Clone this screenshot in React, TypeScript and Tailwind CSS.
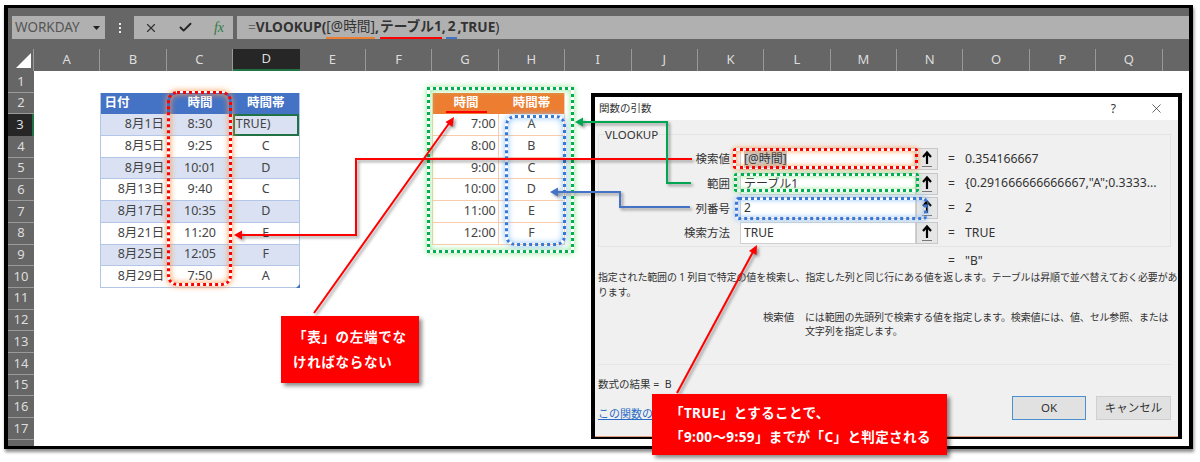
import { Check, X } from 'lucide-react';

const COLUMNS = ['A', 'B', 'C', 'D', 'E', 'F', 'G', 'H', 'I', 'J', 'K', 'L', 'M', 'N', 'O', 'P', 'Q'];
const ROWS = Array.from({ length: 17 }, (_, i) => i + 1);

const SCHEDULE = [
  { date: '8月1日', time: '8:30', band: 'TRUE)' },
  { date: '8月5日', time: '9:25', band: 'C' },
  { date: '8月9日', time: '10:01', band: 'D' },
  { date: '8月13日', time: '9:40', band: 'C' },
  { date: '8月17日', time: '10:35', band: 'D' },
  { date: '8月21日', time: '11:20', band: 'E' },
  { date: '8月25日', time: '12:05', band: 'F' },
  { date: '8月29日', time: '7:50', band: 'A' },
];

const LOOKUP = [
  { time: '7:00', band: 'A' },
  { time: '8:00', band: 'B' },
  { time: '9:00', band: 'C' },
  { time: '10:00', band: 'D' },
  { time: '11:00', band: 'E' },
  { time: '12:00', band: 'F' },
];

const ARGS = [
  { label: '検索値', value: '[@時間]', result: '0.354166667', selected: true },
  { label: '範囲', value: 'テーブル1', result: '{0.291666666666667,"A";0.3333...' },
  { label: '列番号', value: '2', result: '2' },
  { label: '検索方法', value: 'TRUE', result: 'TRUE' },
];

function RefButton() {
  return (
    <div className="flex h-[22px] w-[22px] items-center justify-center border border-[#c8c8c8] bg-[#e6e6e6]">
      <svg width="14" height="18" viewBox="0 0 14 18">
        <path d="M7 14V3M3 7l4-4.500L11 7" fill="none" stroke="#000" strokeWidth="2.2" />
        <path d="M2 16.500h10" stroke="#777" strokeWidth="1" />
      </svg>
    </div>
  );
}

function FunctionDialog() {
  return (
    <div className="absolute left-[591px] top-[93px] flex h-[346px] w-[591px] flex-col border-[4px] border-b-[2px] border-black text-[11.500px] text-[#333]">
      <div className="flex h-[23px] shrink-0 items-center justify-between bg-white pl-[4px] pr-[14px] text-[10.500px]">
        <span>関数の引数</span>
        <div className="flex items-center gap-[33px]">
          <span className="text-[12px]">?</span>
          <X className="h-[15px] w-[15px]" strokeWidth={1.2} />
        </div>
      </div>
      <div className="flex flex-1 flex-col border-b border-[#e0a080] bg-[#f0f0f0] pl-[3px] pr-[7px]">
        <div className="mt-[14px] h-[113px] shrink-0 border border-[#e4e4e4]">
          <div className="-mt-[9px] ml-[6px] h-[18px] w-fit bg-[#f0f0f0] leading-[18px]">VLOOKUP</div>
          <div className="mt-[4px] flex flex-col gap-[2.600px]">
            {ARGS.map((arg) => (
              <div key={arg.label} className="flex h-[22px] items-center">
                <span className="w-[131px] text-right">{arg.label}</span>
                <div className="ml-[10px] flex h-[22px] w-[176px] items-center border border-[#d0d0d0] bg-white pl-[3px] text-[12px]">
                  <span className={arg.selected ? 'bg-[#c8c8c8]' : ''}>{arg.value}</span>
                </div>
                <RefButton />
                <span className="ml-[10px] w-[17px] text-[12px]">=</span>
                <span className="text-[12.300px]">{arg.result}</span>
              </div>
            ))}
          </div>
        </div>
        <div className="mt-[6px] flex h-[16px] shrink-0 items-center pl-[350px] text-[12px]">
          <span className="w-[17px]">=</span>
          <span>"B"</span>
        </div>
        <p className="mt-[1px] whitespace-nowrap text-[10px] leading-[15px] tracking-[-0.15px]">
          指定された範囲の 1 列目で特定の値を検索し、指定した列と同じ行にある値を返します。テーブルは昇順で並べ替えておく必要があ
          <br />
          ります。
        </p>
        <div className="mt-[11px] flex whitespace-nowrap text-[10px] leading-[13.500px] tracking-[-0.15px]">
          <span className="ml-[165px] w-[42px] text-[10.500px]">検索値</span>
          <span>
            には範囲の先頭列で検索する値を指定します。検索値には、値、セル参照、または
            <br />
            文字列を指定します。
          </span>
        </div>
        <div className="mt-[26px] border-t border-[#e6e6e6] pt-[12px] text-[10.500px] leading-[14px]">
          数式の結果 =&nbsp;&nbsp;B
        </div>
        <div className="mt-[5px] flex items-start justify-between">
          <a className="mt-[11px] whitespace-nowrap text-[11px] leading-[14px] text-[#2a6cc4] underline">この関数のヘルプ(H)</a>
          <div className="flex gap-[10px] text-[11.500px]">
            <button className="h-[24px] w-[74px] border border-[#4a90d0] bg-[#e1e1e1]">OK</button>
            <button className="h-[24px] w-[75px] border border-[#cfcfcf] bg-[#e1e1e1]">キャンセル</button>
          </div>
        </div>
      </div>
    </div>
  );
}

function Annotations() {
  return (
    <svg
      className="pointer-events-none absolute left-0 top-0 drop-shadow-[2px_2px_1.5px_rgba(0,0,0,0.4)]"
      width="1200"
      height="462"
      viewBox="0 0 1200 462"
    >
      <path d="M692 159H356V235H240" fill="none" stroke="#f00" strokeWidth="2" />
      <path d="M234 235l8-4.500v9z" fill="#f00" />
      <path d="M691 183H667V122H582" fill="none" stroke="#00a651" strokeWidth="2" />
      <path d="M575 122l8-4.500v9z" fill="#00a651" />
      <path d="M690 207H620V192H557" fill="none" stroke="#4472c4" strokeWidth="2" />
      <path d="M550 192l8-4.500v9z" fill="#4472c4" />
      <path d="M314 313L450 122" fill="none" stroke="#f00" strokeWidth="2" />
      <path d="M454 117l-1.500 10-7-5z" fill="#f00" />
      <path d="M677 393L754 250" fill="none" stroke="#f00" strokeWidth="2" />
      <path d="M757 245l-.5 10-7.500-4z" fill="#f00" />
    </svg>
  );
}

export default function App() {
  return (
    <div className="relative h-[462px] w-[1200px] overflow-hidden bg-white font-['Noto_Sans','Noto_Sans_CJK_JP',sans-serif]">
      <div className="ml-[4px] mt-[5px] flex h-[444px] w-[1189px] flex-col overflow-hidden border-[4px] border-t-[3px] border-b-[3px] border-black bg-[#666] shadow-[1px_3px_3px_rgba(0,0,0,0.45)]">
        <div className="flex h-[41px] shrink-0 items-start pl-[4px] pt-[8px]">
          <div className="flex h-[23px] w-[93px] items-center justify-between bg-[#b0b0b0] pl-[3px] pr-[5px] text-[13.500px] text-[#555]">
            WORKDAY
            <svg width="7" height="4" viewBox="0 0 7 4">
              <path d="M0 0h7L3.500 4z" fill="#222" />
            </svg>
          </div>
          <div className="flex h-[23px] w-[29px] flex-col items-center justify-center gap-[2px]">
            <i className="h-[2px] w-[2px] bg-[#eee]" />
            <i className="h-[2px] w-[2px] bg-[#eee]" />
            <i className="h-[2px] w-[2px] bg-[#eee]" />
          </div>
          <div className="flex h-[23px] w-[99px] items-center justify-between bg-[#b0b0b0] pl-[10px] pr-[9px]">
            <X className="h-[14px] w-[14px] text-[#333]" strokeWidth={2} />
            <Check className="h-[15px] w-[15px] text-[#222]" strokeWidth={3} />
            <span className="font-['Liberation_Serif',serif] text-[14px] italic text-[#2f7a45]">fx</span>
          </div>
          <div className="ml-[4px] flex h-[23px] flex-1 items-center whitespace-nowrap bg-[#b0b0b0] pl-[11px] text-[13.700px] font-bold text-[#333]">
            <span className="font-normal text-[#666]">=</span>VLOOKUP(
            <span className="border-b-2 border-[#ed7d31] font-normal">[@時間]</span>,
            <span className="ml-[1px] border-b-2 border-[#f00]">テーブル1</span>,
            <span className="border-b-2 border-[#4472c4] px-[2px]">2</span>,TRUE
            <span className="font-normal">)</span>
          </div>
        </div>
        <div className="flex h-[22px] shrink-0 items-stretch">
          <div className="flex w-[26px] shrink-0 items-end justify-end border-r border-[#999] pb-[3px] pr-[2px]">
            <div className="h-0 w-0 border-b-[15px] border-l-[15px] border-b-white border-l-transparent" />
          </div>
          {COLUMNS.map((col) => (
            <div
              key={col}
              className={
                col === 'D'
                  ? 'flex w-[66.400px] shrink-0 items-center justify-center border-b-2 border-[#217346] bg-[#262626] text-[13px] text-[#ddd]'
                  : 'flex w-[66.400px] shrink-0 items-center justify-center border-r border-[#999] text-[13px] text-[#ddd]'
              }
            >
              {col}
            </div>
          ))}
        </div>
        <div className="flex flex-1">
          <div className="w-[26px] shrink-0">
            {ROWS.map((row) => (
              <div
                key={row}
                className={
                  row === 3
                    ? 'flex h-[21.700px] items-center justify-center border-r-2 border-[#217346] bg-[#262626] text-[13px] text-[#ddd]'
                    : 'flex h-[21.700px] items-center justify-center border-b border-[#999] text-[13px] text-[#ddd]'
                }
              >
                {row}
              </div>
            ))}
          </div>
          <div className="grid flex-1 auto-rows-[21.700px] grid-cols-[repeat(18,66.400px)] content-start bg-white text-[12.500px] text-[#444]">
            <div className="relative col-span-3 col-start-2 row-span-9 row-start-2 flex flex-col border-x border-b border-[#b4c6e7]">
              <div className="flex h-[21.700px] shrink-0 items-center bg-[#4472c4] font-bold text-white">
                <span className="w-[66.400px] pl-[3px]">日付</span>
                <span className="w-[66.400px] text-center">時間</span>
                <span className="w-[66.400px] text-center">時間帯</span>
              </div>
              {SCHEDULE.map((row, i) => (
                <div
                  key={row.date}
                  className={
                    i % 2 === 0
                      ? 'flex h-[21.700px] shrink-0 items-center border-b border-[#b4c6e7] bg-[#d9e1f2]'
                      : 'flex h-[21.700px] shrink-0 items-center border-b border-[#b4c6e7] bg-white'
                  }
                >
                  <span className="w-[66.400px] pr-[3px] text-right">{row.date}</span>
                  <span className="w-[66.400px] text-center">{row.time}</span>
                  {i === 0 ? (
                    <span className="flex h-[22px] w-[66.400px] items-center border-2 border-[#217346] pl-[1px]">{row.band}</span>
                  ) : (
                    <span className="w-[66.400px] text-center">{row.band}</span>
                  )}
                </div>
              ))}
              {/* table resize handle */}
              <div className="absolute bottom-[-1px] right-[-1px] h-0 w-0 border-b-[4px] border-l-[4px] border-b-[#4472c4] border-l-transparent" />
            </div>
            <div className="col-span-2 col-start-7 row-span-7 row-start-2 flex flex-col border-x border-b border-[#f8cbad]">
              <div className="flex h-[21.700px] shrink-0 items-center bg-[#ed7d31] font-bold text-white">
                <span className="w-[66.400px] text-center">
                  <span className="inline-block border-b-2 border-[#f00] px-[8px] leading-[17px]">時間</span>
                </span>
                <span className="w-[66.400px] text-center">時間帯</span>
              </div>
              {LOOKUP.map((row) => (
                <div key={row.time} className="flex h-[21.700px] shrink-0 items-center border-b border-[#f8cbad] bg-white">
                  <span className="flex h-full w-[66.400px] items-center justify-end border-r border-[#f8cbad] pr-[2px]">{row.time}</span>
                  <span className="w-[66.400px] text-center">{row.band}</span>
                </div>
              ))}
            </div>
          </div>
        </div>
      </div>

      <FunctionDialog />

      {/* dotted highlights over the sheet and the dialog */}
      <div className="absolute left-[167px] top-[91px] h-[195px] w-[65px] rounded-[10px] border-[3px] border-dotted border-[#f00] shadow-[0_0_6px_#ff9a50,inset_0_0_6px_#ff9a50]" />
      <div className="absolute left-[427px] top-[87px] h-[166px] w-[147px] border-[3px] border-dotted border-[#00b050] shadow-[0_0_6px_#90e890,inset_0_0_6px_#90e890]" />
      <div className="absolute left-[505px] top-[115px] h-[131px] w-[61px] rounded-[10px] border-[3px] border-dotted border-[#3a78d8] shadow-[0_0_6px_#90c4f8,inset_0_0_6px_#90c4f8]" />
      <div className="absolute left-[733px] top-[148px] h-[21px] w-[185px] rounded-[3px] border-[3px] border-dotted border-[#f00] shadow-[0_0_5px_#ff9a50,inset_0_0_5px_#ff9a50]" />
      <div className="absolute left-[734px] top-[173px] h-[19px] w-[185px] rounded-[3px] border-[3px] border-dotted border-[#00b050] shadow-[0_0_4px_#90e890,inset_0_0_4px_#90e890]" />
      <div className="absolute left-[735px] top-[197px] h-[23px] w-[192px] rounded-[4px] border-[3px] border-dotted border-[#3a78d8] shadow-[0_0_5px_#90c4f8,inset_0_0_5px_#90c4f8]" />

      <Annotations />

      <div className="absolute left-[281px] top-[316px] flex h-[67px] w-[138px] flex-col justify-center gap-[7px] bg-[#f00] pl-[12px] text-[13.500px] font-bold leading-[18px] tracking-[0.700px] text-white shadow-[3px_3px_4px_rgba(0,0,0,0.45)]">
        <span>「表」の左端でな</span>
        <span>ければならない</span>
      </div>
      <div className="absolute left-[652px] top-[394px] flex h-[61px] w-[295px] flex-col justify-center gap-[6px] bg-[#f00] pl-[18px] text-[13.500px] font-bold leading-[18px] tracking-[0.400px] text-white shadow-[3px_3px_4px_rgba(0,0,0,0.45)]">
        <span>「TRUE」とすることで、</span>
        <span>「9:00～9:59」までが「C」と判定される</span>
      </div>
    </div>
  );
}
